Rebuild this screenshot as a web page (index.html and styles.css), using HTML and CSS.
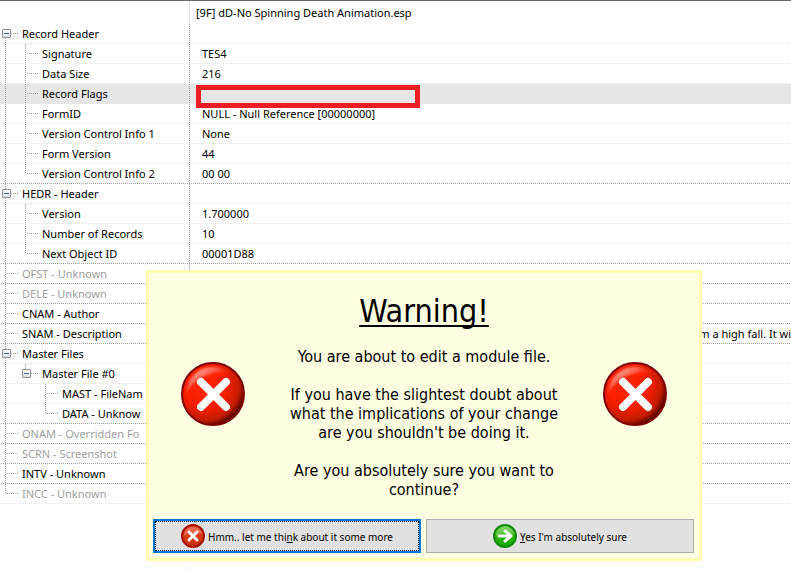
FILE: index.html
```html
<!DOCTYPE html>
<html lang="en">
<head>
<meta charset="utf-8">
<title>Module record</title>
<link rel="stylesheet" href="styles.css">
</head>
<body>
<svg class="defs" aria-hidden="true">
  <defs>
    <radialGradient id="red" cx="38%" cy="38%" r="66%">
      <stop offset="0" stop-color="#ff2604"/>
      <stop offset=".5" stop-color="#fa1e00"/>
      <stop offset=".82" stop-color="#c41c00"/>
      <stop offset="1" stop-color="#4c0000"/>
    </radialGradient>
    <linearGradient id="shine" x1="0" y1="0" x2="1" y2="1">
      <stop offset="0" stop-color="#fff" stop-opacity=".9"/>
      <stop offset=".5" stop-color="#fff" stop-opacity=".1"/>
    </linearGradient>
    <linearGradient id="redsmall" x1="0" y1="0" x2="0" y2="1">
      <stop offset="0" stop-color="#ee4a28"/>
      <stop offset="1" stop-color="#c62c04"/>
    </linearGradient>
    <linearGradient id="green" x1="0" y1="0" x2="0" y2="1">
      <stop offset="0" stop-color="#6cd04e"/>
      <stop offset=".5" stop-color="#2eb40c"/>
      <stop offset="1" stop-color="#16a800"/>
    </linearGradient>
    <filter id="soft"><feGaussianBlur stdDeviation="1"/></filter>
    <symbol id="stop" viewBox="0 0 64 64">
      <circle cx="32" cy="32" r="31" fill="url(#red)" stroke="#800000" stroke-width="2"/>
      <path d="M5 32C6 16 18 5 32 5c7 0 12 2 16 6C32 9 15 14 5 32z" fill="url(#shine)" filter="url(#soft)"/>
      <path d="M20 20l25 25M45 20L20 45" stroke="#fff" stroke-width="8" stroke-linecap="round"/>
    </symbol>
  </defs>
</svg>

<main class="view">
<table class="records">
  <thead>
    <tr><th class="name"></th><th class="file">[9F] dD-No Spinning Death Animation.esp</th></tr>
  </thead>
  <tbody>
    <tr><td><div class="node"><span class="guide open first"><button class="toggle" aria-label="Collapse"></button></span>Record Header</div></td><td></td></tr>
    <tr><td><div class="node"><span class="guide line"></span><span class="guide tee"></span>Signature</div></td><td>TES4</td></tr>
    <tr><td><div class="node"><span class="guide line"></span><span class="guide tee"></span>Data Size</div></td><td>216</td></tr>
    <tr class="selected"><td><div class="node"><span class="guide line"></span><span class="guide tee"></span>Record Flags</div></td><td><div class="mark"></div></td></tr>
    <tr><td><div class="node"><span class="guide line"></span><span class="guide tee"></span>FormID</div></td><td>NULL - Null Reference [00000000]</td></tr>
    <tr><td><div class="node"><span class="guide line"></span><span class="guide tee"></span>Version Control Info 1</div></td><td>None</td></tr>
    <tr><td><div class="node"><span class="guide line"></span><span class="guide tee"></span>Form Version</div></td><td>44</td></tr>
    <tr class="end"><td><div class="node"><span class="guide line"></span><span class="guide corner"></span>Version Control Info 2</div></td><td>00 00</td></tr>
    <tr><td><div class="node"><span class="guide open"><button class="toggle" aria-label="Collapse"></button></span>HEDR - Header</div></td><td></td></tr>
    <tr><td><div class="node"><span class="guide line"></span><span class="guide tee"></span>Version</div></td><td>1.700000</td></tr>
    <tr><td><div class="node"><span class="guide line"></span><span class="guide tee"></span>Number of Records</div></td><td>10</td></tr>
    <tr class="end"><td><div class="node"><span class="guide line"></span><span class="guide corner"></span>Next Object ID</div></td><td>00001D88</td></tr>
    <tr class="end empty"><td><div class="node"><span class="guide tee"></span>OFST - Unknown</div></td><td></td></tr>
    <tr class="end empty"><td><div class="node"><span class="guide tee"></span>DELE - Unknown</div></td><td></td></tr>
    <tr class="end"><td><div class="node"><span class="guide tee"></span>CNAM - Author</div></td><td></td></tr>
    <tr class="end"><td><div class="node"><span class="guide tee"></span>SNAM - Description</div></td><td class="tail">m a high fall. It wi</td></tr>
    <tr><td><div class="node"><span class="guide open"><button class="toggle" aria-label="Collapse"></button></span>Master Files</div></td><td></td></tr>
    <tr><td><div class="node"><span class="guide line"></span><span class="guide open last"><button class="toggle" aria-label="Collapse"></button></span>Master File #0</div></td><td></td></tr>
    <tr><td><div class="node"><span class="guide line"></span><span class="guide"></span><span class="guide tee"></span>MAST - FileNam</div></td><td></td></tr>
    <tr class="end"><td><div class="node"><span class="guide line"></span><span class="guide"></span><span class="guide corner"></span>DATA - Unknow</div></td><td></td></tr>
    <tr class="end empty"><td><div class="node"><span class="guide tee"></span>ONAM - Overridden Fo</div></td><td></td></tr>
    <tr class="end empty"><td><div class="node"><span class="guide tee"></span>SCRN - Screenshot</div></td><td></td></tr>
    <tr class="end"><td><div class="node"><span class="guide tee"></span>INTV - Unknown</div></td><td></td></tr>
    <tr class="empty"><td><div class="node"><span class="guide corner"></span>INCC - Unknown</div></td><td></td></tr>
  </tbody>
</table>
<div class="rest"></div>
</main>

<section class="dialog" role="alertdialog" aria-labelledby="warning">
  <div class="message">
    <svg class="big"><use href="#stop"/></svg>
    <div class="copy">
      <h1 id="warning">Warning!</h1>
      <p>You are about to edit a module file.</p>
      <p>If you have the slightest doubt about<br>what the implications of your change<br>are you shouldn't be doing it.</p>
      <p>Are you absolutely sure you want to<br>continue?</p>
    </div>
    <svg class="big"><use href="#stop"/></svg>
  </div>
  <div class="actions">
    <button class="action default">
      <svg class="small" viewBox="0 0 24 24"><circle cx="12" cy="12" r="11" fill="url(#redsmall)" stroke="#a80c00" stroke-width="2"/><path d="M3 12C3 6 7 3 12 3s9 3 9 7C14 8 8 9 3 12z" fill="#fff" opacity=".2"/><path d="M8 8l8 8M16 8l-8 8" stroke="#fff" stroke-width="3" stroke-linecap="round"/></svg>
      <span>Hmm.. let me thi<u>n</u>k about it some more</span>
    </button>
    <button class="action">
      <svg class="small" viewBox="0 0 24 24"><circle cx="12" cy="12" r="11" fill="url(#green)" stroke="#138a0c" stroke-width="2"/><path d="M3 12C3 6 7 3 12 3s9 3 9 7C14 8 8 9 3 12z" fill="#fff" opacity=".2"/><path d="M6 12h11M12 7l6 5-6 5" fill="none" stroke="#fff" stroke-width="3" stroke-linecap="round" stroke-linejoin="round"/></svg>
      <span><u>Y</u>es I'm absolutely sure</span>
    </button>
  </div>
</section>
</body>
</html>
```

FILE: styles.css
```css
* { box-sizing: border-box; }

body {
  --dots: #a0a0a0;
  --faint: #e6e6e6;
  --vdots: repeating-linear-gradient(var(--dots) 0 1px, transparent 1px 2px);
  --hdots: repeating-linear-gradient(90deg, var(--dots) 0 1px, transparent 1px 2px);
  margin: 0;
  background: #fff;
  color: #000;
  font: 11px/20px "Noto Sans", "Open Sans", sans-serif;
  overflow: hidden;
}

.defs { position: absolute; width: 0; height: 0; }

.view {
  display: flex;
  flex-direction: column;
  min-height: 100vh;
  border-top: 1px solid #696969;
}

.records {
  width: 100%;
  table-layout: fixed;
  border-spacing: 0;
  white-space: nowrap;
}

th, td { padding: 0; text-align: left; font-weight: 400; }
th { height: 23px; }
.name { width: 190px; border-right: 1px solid var(--faint); }
.file { padding-left: 6px; }

td {
  height: 20px;
  overflow: hidden;
  background: repeating-linear-gradient(90deg, var(--faint) 0 1px, transparent 1px 2px) 1px 100% / 100% 1px no-repeat;
}
.end td { background-image: var(--hdots); }
td:first-child {
  background-image: var(--vdots), repeating-linear-gradient(90deg, var(--faint) 0 1px, transparent 1px 2px);
  background-position: 189px 0, 1px 100%;
  background-size: 1px 100%, 100% 1px;
}
.end td:first-child { background-image: var(--vdots), var(--hdots); }
td + td { padding-left: 12px; }
.records .tail { padding-left: 0; text-align: right; }
.selected td { background-color: #e6e6e6; overflow: visible; }
.empty { color: #a0a0a0; }

.node { display: flex; height: 20px; padding-right: 2px; }
.guide { flex: none; width: 20px; height: 20px; background-repeat: no-repeat; }
.guide:last-of-type { margin-right: 2px; }
.line { background-image: var(--vdots); background-size: 1px 100%; background-position: 5px 0; }
.tee, .corner, .open {
  background-image: var(--vdots), var(--hdots);
  background-size: 1px 100%, 12px 1px;
  background-position: 5px 0, 7px 9px;
}
.corner { background-size: 1px 10px, 12px 1px; }
.first { background-size: 1px 10px, 12px 1px; background-position: 5px 100%, 7px 9px; }
.last { background-size: 1px 5px, 12px 1px; }

.toggle {
  display: block;
  width: 9px;
  height: 9px;
  margin: 5px 0 0 2px;
  padding: 0;
  border: 1px solid #919191;
  border-radius: 1px;
  background: linear-gradient(#4b63a7, #4b63a7) 50% 50% / 5px 1px no-repeat, linear-gradient(#fff, #ddd);
}

.mark {
  position: absolute;
  left: 196px;
  top: 85px;
  width: 224px;
  height: 23px;
  border: 5px solid #ed1c24;
}

.rest {
  flex: 1;
  background: repeating-linear-gradient(var(--faint) 0 1px, transparent 1px 2px) 189px 0 / 1px 100% no-repeat;
}

.dialog {
  position: absolute;
  left: 146px;
  top: 270px;
  width: 556px;
  padding: 4px 5px 5px 4px;
  border: 3px solid #ffffb0;
  background: #ffffe1;
  font-family: "DejaVu Sans Condensed", "DejaVu Sans", sans-serif;
}

.message {
  display: flex;
  align-items: flex-start;
  justify-content: space-between;
  padding: 15px 27px 20px 28px;
}
.big { width: 64px; height: 64px; margin-top: 70px; }
.copy { font-size: 16px; line-height: 19px; text-align: center; white-space: nowrap; }
h1 {
  margin: 0 0 16px;
  font-size: 32px;
  line-height: 39px;
  font-weight: 400;
  text-decoration: underline 2px;
  text-decoration-skip-ink: none;
  text-underline-offset: 3px;
}
p { margin: 0; }
p + p { margin-top: 19px; }

.actions { display: grid; grid-template-columns: 1fr 1fr; gap: 5px; }
.action {
  display: flex;
  align-items: center;
  justify-content: center;
  gap: 3px;
  height: 34px;
  padding: 0;
  border: 1px solid #adadad;
  background: #e1e1e1;
  color: #000;
  font: 10px/14px "Noto Sans", "Open Sans", sans-serif;
  white-space: nowrap;
}
.action span { padding-top: 2px; }
.default { border: 2px solid #0078d7; outline: 1px dotted #000; outline-offset: -3px; }
.small { width: 24px; height: 24px; }
```
